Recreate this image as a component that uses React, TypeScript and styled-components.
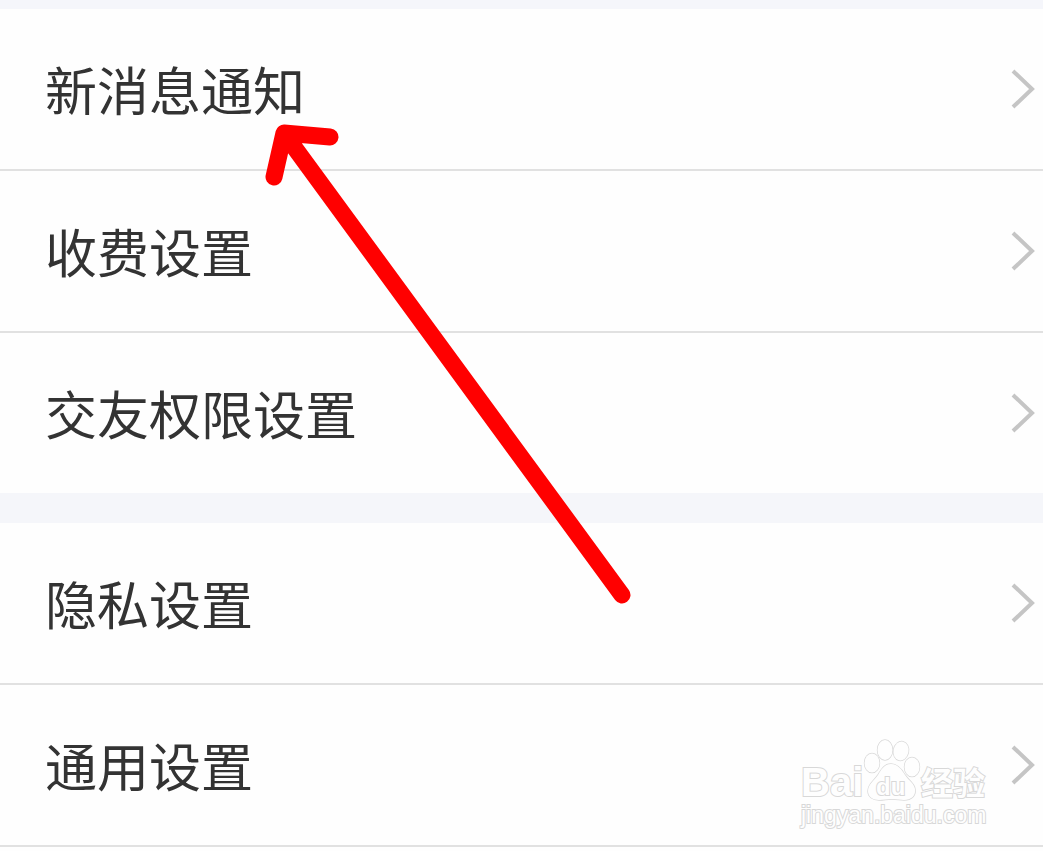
import React from "react";
import styled, { createGlobalStyle } from "styled-components";

const GlobalStyle = createGlobalStyle`
  *, *::before, *::after { box-sizing: border-box; }
  body {
    margin: 0;
    background: #fefefe;
    font-family: "Noto Sans CJK SC", "Noto Sans", sans-serif;
  }
`;

const Page = styled.main`
  position: relative;
  min-height: 100vh;
  overflow: hidden;
  padding-top: 9px;
  background: linear-gradient(#f5f6fb 9px, #fefefe 9px);
`;

const Group = styled.ul<{ $closed?: boolean }>`
  margin: 0;
  padding: 0;
  list-style: none;

  & + & {
    border-top: 30px solid #f5f6fa;
  }

  & > li:not(:last-child) {
    border-bottom: 2px solid #e1e1e1;
  }

  & > li:last-child {
    border-bottom: ${({ $closed }) => ($closed ? "2px solid #e1e1e1" : "none")};
  }
`;

const RowButton = styled.button`
  display: flex;
  align-items: center;
  justify-content: space-between;
  width: 100%;
  height: 160px;
  padding: 0 8px 0 45px;
  border: 0;
  background: transparent;
  color: #333;
  font-family: inherit;
  font-size: 52px;
  font-weight: 400;
  line-height: 76px;
  text-align: left;
  cursor: pointer;
`;

const ChevronIcon = styled.svg`
  flex: none;
  width: 24px;
  height: 42px;
  fill: none;
  stroke: #c5c5c5;
  stroke-width: 4;
`;

const ArrowMark = styled.svg`
  position: absolute;
  top: 120px;
  left: 260px;
  width: 376px;
  height: 490px;
  pointer-events: none;
  fill: none;
  stroke: #ff0000;
  stroke-width: 17;
  stroke-linecap: round;
  stroke-linejoin: round;
`;

const Watermark = styled.div`
  position: absolute;
  top: 738px;
  right: 54px;
  display: flex;
  flex-direction: column;
  width: 188px;
  color: #fefefe;
  pointer-events: none;
  -webkit-text-stroke: 2px #d8d8d8;
  paint-order: stroke fill;
`;

const Logo = styled.div`
  display: flex;
  align-items: flex-end;
  height: 64px;
`;

const Latin = styled.span`
  width: 62px;
  font: 700 40px/40px "Liberation Sans", sans-serif;
`;

const Han = styled.span`
  font-size: 32px;
  font-weight: 700;
  line-height: 42px;
`;

const Paw = styled.svg`
  flex: none;
  width: 58px;
  height: 64px;
  fill: #fefefe;
  stroke: #d8d8d8;
  stroke-width: 1.4;

  text {
    font: 700 24px "Liberation Sans", sans-serif;
    stroke-width: 2;
    paint-order: stroke fill;
  }
`;

const Site = styled.span`
  font: 400 23px/26px "Liberation Sans", sans-serif;
`;

function Chevron() {
  return (
    <ChevronIcon viewBox="0 0 24 42" aria-hidden="true">
      <path d="M2 3 L21 21 L2 39" />
    </ChevronIcon>
  );
}

function SettingsGroup({ items, closed }: { items: string[]; closed?: boolean }) {
  return (
    <Group $closed={closed}>
      {items.map((label) => (
        <li key={label}>
          <RowButton type="button">
            <span>{label}</span>
            <Chevron />
          </RowButton>
        </li>
      ))}
    </Group>
  );
}

export default function App() {
  return (
    <>
      <GlobalStyle />
      <Page>
        <SettingsGroup items={["新消息通知", "收费设置", "交友权限设置"]} />
        <SettingsGroup items={["隐私设置", "通用设置"]} closed />
        <ArrowMark viewBox="0 0 376 490" aria-hidden="true">
          <path d="M70 17 L24 13 L14 57 M26 16 L362 475" />
        </ArrowMark>
        <Watermark>
          <Logo>
            <Latin>Bai</Latin>
            <Paw viewBox="0 0 58 64" aria-hidden="true">
              <ellipse cx="9" cy="25" rx="7.5" ry="9.5" />
              <ellipse cx="22" cy="12" rx="7.5" ry="10" />
              <ellipse cx="38" cy="13" rx="7.5" ry="9.5" transform="rotate(12 38 13)" />
              <ellipse cx="49" cy="29" rx="7.5" ry="9.5" />
              <path d="M28 26 C21 26 18 32 15 37 C11 43 5 46 5 53 C5 59 10 62 16 62 C21 62 24 61 29 61 C34 61 37 62 41 62 C48 62 53 58 52 51 C51 45 46 43 42 37 C39 32 35 26 28 26 Z" />
              <text x="13" y="57">du</text>
            </Paw>
            <Han>经验</Han>
          </Logo>
          <Site>jingyan.baidu.com</Site>
        </Watermark>
      </Page>
    </>
  );
}
